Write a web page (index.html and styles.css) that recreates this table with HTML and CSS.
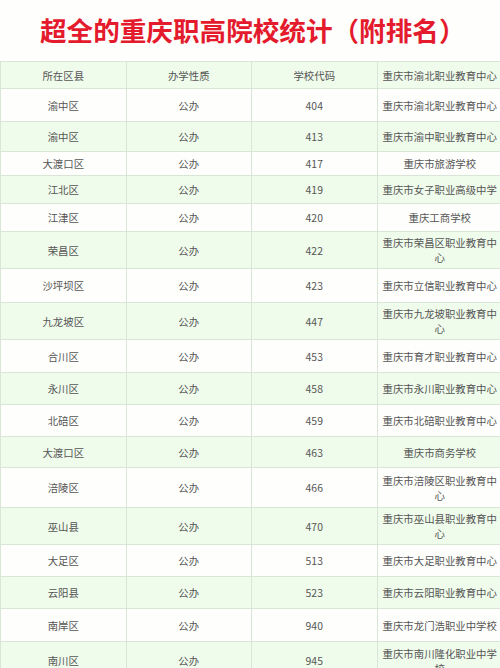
FILE: index.html
```html
<!DOCTYPE html>
<html lang="zh">
<head>
<meta charset="utf-8">
<link rel="stylesheet" href="styles.css">
</head>
<body>
<div class="page">
  <h1 class="title">超全的重庆职高院校统计（附排名）</h1>
  <table class="grid">
    <tr class="head h27"><td>所在区县</td><td>办学性质</td><td>学校代码</td><td>重庆市渝北职业教育中心</td></tr>
    <tr class="h33"><td>渝中区</td><td>公办</td><td>404</td><td>重庆市渝北职业教育中心</td></tr>
    <tr class="h30"><td>渝中区</td><td>公办</td><td>413</td><td>重庆市渝中职业教育中心</td></tr>
    <tr class="h24"><td>大渡口区</td><td>公办</td><td>417</td><td>重庆市旅游学校</td></tr>
    <tr class="h28"><td>江北区</td><td>公办</td><td>419</td><td>重庆市女子职业高级中学</td></tr>
    <tr class="h28"><td>江津区</td><td>公办</td><td>420</td><td>重庆工商学校</td></tr>
    <tr class="h37"><td>荣昌区</td><td>公办</td><td>422</td><td>重庆市荣昌区职业教育中心</td></tr>
    <tr class="h34"><td>沙坪坝区</td><td>公办</td><td>423</td><td>重庆市立信职业教育中心</td></tr>
    <tr class="h37"><td>九龙坡区</td><td>公办</td><td>447</td><td>重庆市九龙坡职业教育中心</td></tr>
    <tr class="h33"><td>合川区</td><td>公办</td><td>453</td><td>重庆市育才职业教育中心</td></tr>
    <tr class="h32"><td>永川区</td><td>公办</td><td>458</td><td>重庆市永川职业教育中心</td></tr>
    <tr class="h32"><td>北碚区</td><td>公办</td><td>459</td><td>重庆市北碚职业教育中心</td></tr>
    <tr class="h31"><td>大渡口区</td><td>公办</td><td>463</td><td>重庆市商务学校</td></tr>
    <tr class="h40"><td>涪陵区</td><td>公办</td><td>466</td><td>重庆市涪陵区职业教育中心</td></tr>
    <tr class="h37"><td>巫山县</td><td>公办</td><td>470</td><td>重庆市巫山县职业教育中心</td></tr>
    <tr class="h32"><td>大足区</td><td>公办</td><td>513</td><td>重庆市大足职业教育中心</td></tr>
    <tr class="h32"><td>云阳县</td><td>公办</td><td>523</td><td>重庆市云阳职业教育中心</td></tr>
    <tr class="h33"><td>南岸区</td><td>公办</td><td>940</td><td>重庆市龙门浩职业中学校</td></tr>
    <tr class="h38"><td>南川区</td><td>公办</td><td>945</td><td>重庆市南川隆化职业中学校</td></tr>
  </table>
</div>
</body>
</html>
```
FILE: styles.css
```css
html, body {
  margin: 0;
  padding: 0;
  background: #fefefc;
}
.page {
  width: 500px;
  height: 668px;
  overflow: hidden;
  font-family: "Noto Sans CJK SC", "Noto Sans", sans-serif;
}
.title {
  margin: 0;
  height: 61px;
  box-sizing: border-box;
  padding: 14px 0 0 40px;
  font-size: 26.6px;
  line-height: 32px;
  font-weight: 700;
  color: #e41a2d;
  white-space: nowrap;
}
.grid {
  width: 503px;
  table-layout: fixed;
  border-collapse: collapse;
  font-size: 10.4px;
  color: #555;
}
.grid td {
  border: 1px solid #d9e5d6;
  padding: 0 5px;
  text-align: center;
  vertical-align: middle;
  line-height: 15px;
}
.grid tr:nth-child(odd) td {
  background: #effbeb;
}
.grid tr:nth-child(even) td {
  background: #fefefc;
}
.h24 td { height: 23px; }
.h27 td { height: 26px; }
.h28 td { height: 27px; }
.h30 td { height: 29px; }
.h31 td { height: 30px; }
.h32 td { height: 31px; }
.h33 td { height: 32px; }
.h34 td { height: 33px; }
.h37 td { height: 36px; }
.h38 td { height: 37px; }
.h40 td { height: 39px; }
```
